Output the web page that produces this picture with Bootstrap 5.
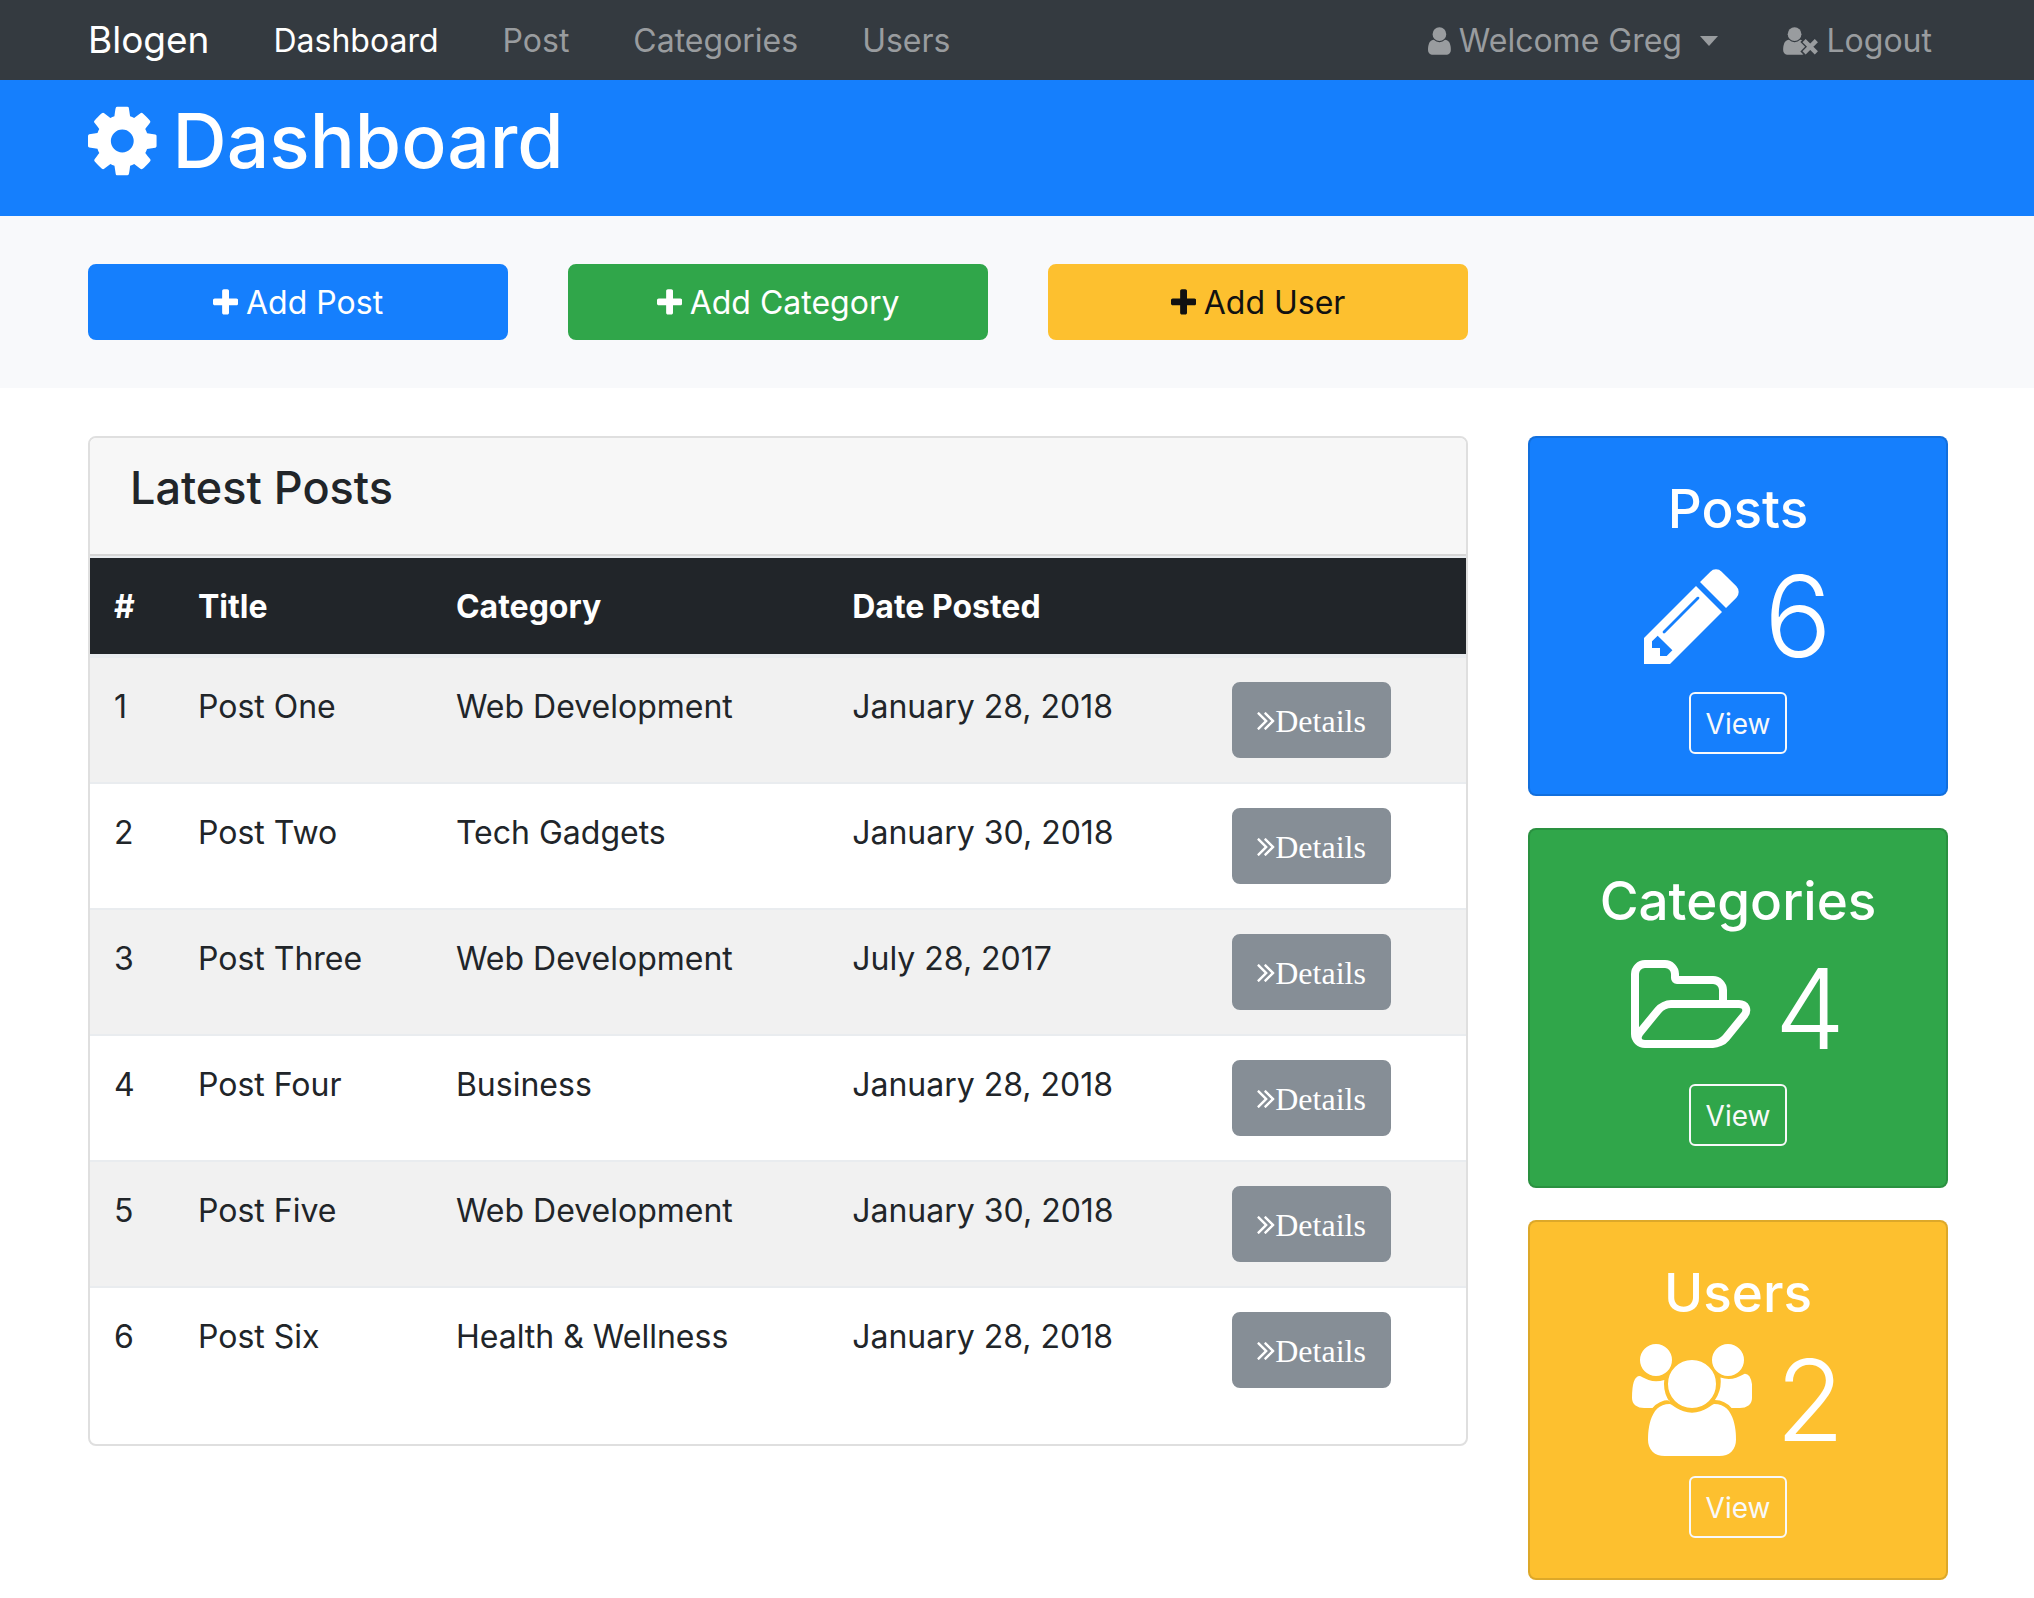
<!DOCTYPE html>
<html lang="en">
<head>
<meta charset="utf-8">
<meta name="viewport" content="width=device-width, initial-scale=1">
<title>Blogen</title>
<link rel="stylesheet" href="https://cdn.jsdelivr.net/npm/bootstrap@5.3.0/dist/css/bootstrap.min.css">
<style>
  :root {
    --brand-blue: #157ffd;
    --brand-green: #30a64a;
    --brand-yellow: #fdc02f;
    --bar: #343a40;
    --ink: #212529;
    --line: #e9ecef;
  }
  html { font-size: 32px; }
  body { font-family: Inter, "Liberation Sans", sans-serif; color: var(--ink); background: #fff; line-height: 1.5; }
  h1, h2, h3, h4 { line-height: 1.1; margin-bottom: 16px; font-weight: 500; }
  .container { max-width: 1920px; padding-left: 31px; padding-right: 29px; }
  .row { --bs-gutter-x: 60px; }

  .icon { height: 1em; width: auto; fill: currentColor; flex: none; }

  /* top bar */
  .topbar { background: var(--bar); padding: 0; min-height: 80px; --bs-navbar-brand-margin-end: 32px; }
  .topbar .navbar-brand { font-size: 37px; line-height: 60px; padding: 0; color: #fff; }
  .topbar .nav-link { color: #999c9f; padding: 17px 16px 15px; line-height: 48px; display: flex; align-items: center; gap: 8px; }
  .topbar .nav-link.active { color: #fff; }
  .topbar .dropdown-toggle::after { border-top-width: 10px; border-left-width: 9px; border-right-width: 9px; margin-left: 10px; }

  .page-head { background: var(--brand-blue); color: #fff; padding: 17px 0 15px; }
  .page-head h1 { font-size: 75px; line-height: 88px; display: flex; align-items: center; gap: 16px; }
  .page-head .icon { height: 80px; }

  .actions { background: #f8f9fb; padding: 48px 0; margin-bottom: 48px; }

  .btn { --bs-btn-border-width: 2px; --bs-btn-border-radius: 8px; --bs-btn-line-height: 40px; --bs-btn-font-size: 32px; padding: 17px 24px 15px; }
  .btn-add { display: flex; justify-content: center; align-items: center; gap: 8px; }
  .btn-blue { --bs-btn-bg: var(--brand-blue); --bs-btn-border-color: var(--brand-blue); --bs-btn-color: #fff; --bs-btn-hover-bg: #0069d9; --bs-btn-hover-color: #fff; }
  .btn-green { --bs-btn-bg: var(--brand-green); --bs-btn-border-color: var(--brand-green); --bs-btn-color: #fff; --bs-btn-hover-bg: #218838; --bs-btn-hover-color: #fff; }
  .btn-yellow { --bs-btn-bg: var(--brand-yellow); --bs-btn-border-color: var(--brand-yellow); --bs-btn-color: #111; --bs-btn-hover-bg: #e0a800; --bs-btn-hover-color: #111; }
  .btn-details { --bs-btn-bg: #868e96; --bs-btn-border-color: #868e96; --bs-btn-color: #fff; --bs-btn-hover-bg: #727b84; --bs-btn-hover-color: #fff; font-family: "Liberation Serif", "Times New Roman", serif; padding-left: 23px; padding-right: 23px; }
  .btn-view { --bs-btn-border-color: #f8f9fa; --bs-btn-color: #f8f9fa; --bs-btn-hover-bg: #f8f9fa; --bs-btn-hover-color: #212529; --bs-btn-font-size: 28px; --bs-btn-line-height: 42px; --bs-btn-border-radius: 6px; padding: 9px 15px 7px; }

  .card { --bs-card-border-width: 2px; --bs-card-border-color: #dfdfdf; --bs-card-border-radius: 8px; --bs-card-inner-border-radius: 6px; }
  .posts-head { background: #f7f7f7; padding: 24px 40px; border-bottom: 2px solid #d6d6d6; }
  .posts-head h4 { font-size: 45px; line-height: 52px; }

  .posts-table { border-collapse: separate; border-spacing: 0; table-layout: fixed; margin-bottom: 32px; line-height: 50px; --bs-table-striped-bg: #f1f1f1; --bs-table-color: var(--ink); }
  .posts-table > :not(caption) > * > * { padding: 24px; border: 0 solid var(--line); }
  .posts-table thead > tr > th { background: #212529; color: #fff; padding-bottom: 22px; border-top-width: 2px; border-bottom-width: 4px; background-clip: padding-box; box-shadow: none; }
  .posts-table tbody > tr:not(:first-child) > td { border-top-width: 2px; }
  .w-num { width: 6.1%; }
  .w-title { width: 18.75%; }
  .w-cat { width: 28.8%; }
  .w-date { width: 27.6%; }

  .stat { color: #fff; border-color: rgba(0, 0, 0, .125); background-clip: border-box; }
  .stat + .stat { margin-top: 32px; }
  .stat .card-body { padding: 40px; }
  .stat h3 { font-size: 53px; line-height: 62px; }
  .stat .figure-line { font-size: 112px; font-weight: 300; line-height: 120px; margin-bottom: 16px; display: flex; justify-content: center; align-items: center; gap: 24px; }
  .stat-blue { background-color: var(--brand-blue); }
  .stat-green { background-color: var(--brand-green); }
  .stat-yellow { background-color: var(--brand-yellow); }
</style>
<script src="https://cdn.jsdelivr.net/npm/bootstrap@5.3.0/dist/js/bootstrap.bundle.min.js" defer></script>
</head>
<body>

<svg width="0" height="0" class="d-none" aria-hidden="true">
  <symbol id="i-plus" viewBox="192 0 1408 1792"><path d="M1600 736v192q0 40-28 68t-68 28h-416v416q0 40-28 68t-68 28h-192q-40 0-68-28t-28-68v-416h-416q-40 0-68-28t-28-68v-192q0-40 28-68t68-28h416v-416q0-40 28-68t68-28h192q40 0 68 28t28 68v416h416q40 0 68 28t28 68z"/></symbol>
  <symbol id="i-more" viewBox="384 64 1024 1792"><path d="M979 960q0 13-10 23l-466 466q-10 10-23 10t-23-10l-50-50q-10-10-10-23t10-23l393-393-393-393q-10-10-10-23t10-23l50-50q10-10 23-10t23 10l466 466q10 10 10 23zm384 0q0 13-10 23l-466 466q-10 10-23 10t-23-10l-50-50q-10-10-10-23t10-23l393-393-393-393q-10-10-10-23t10-23l50-50q10-10 23-10t23 10l466 466q10 10 10 23z"/></symbol>
</svg>

<nav class="navbar navbar-expand-sm topbar" data-bs-theme="dark">
  <div class="container">
    <a class="navbar-brand" href="#">Blogen</a>
    <div class="collapse navbar-collapse">
      <ul class="navbar-nav">
        <li class="nav-item px-2"><a class="nav-link active" aria-current="page" href="#">Dashboard</a></li>
        <li class="nav-item px-2"><a class="nav-link" href="#">Post</a></li>
        <li class="nav-item px-2"><a class="nav-link" href="#">Categories</a></li>
        <li class="nav-item px-2"><a class="nav-link" href="#">Users</a></li>
      </ul>
      <ul class="navbar-nav ms-auto">
        <li class="nav-item dropdown me-3">
          <a class="nav-link dropdown-toggle" href="#" role="button" data-bs-toggle="dropdown" aria-expanded="false">
            <svg class="icon" viewBox="256 0 1280 1792" aria-hidden="true"><path d="M1536 1399q0 109-62.500 187t-150.500 78h-854q-88 0-150.500-78t-62.500-187q0-85 8.500-160.500t31.500-152 58.500-131 94-89 134.500-34.500q131 128 313 128t313-128q76 0 134.500 34.500t94 89 58.500 131 31.500 152 8.500 160.500zm-256-887q0 159-112.500 271.500t-271.500 112.500-271.500-112.500-112.500-271.500 112.500-271.500 271.500-112.500 271.500 112.500 112.500 271.500z"/></svg>
            Welcome Greg</a>
          <ul class="dropdown-menu">
            <li><a class="dropdown-item" href="#">Profile</a></li>
            <li><a class="dropdown-item" href="#">Settings</a></li>
          </ul>
        </li>
        <li class="nav-item">
          <a class="nav-link" href="#">
            <svg class="icon" viewBox="0 0 2048 1792" aria-hidden="true"><circle cx="704" cy="512" r="384"/><path d="M1344 1399q0 109-62.500 187t-150.500 78h-854q-88 0-150.500-78t-62.500-187q0-85 8.500-160.500t31.500-152 58.500-131 94-89 134.500-34.500q131 128 313 128t313-128q76 0 134.500 34.500t94 89 58.500 131 31.500 152 8.500 160.500z"/><path d="M1170 806L1990 1626M1990 806L1170 1626" fill="none" stroke="#343a40" stroke-width="400"/><path d="M1236 872L1924 1560M1924 872L1236 1560" fill="none" stroke="currentColor" stroke-width="250"/></svg>
            Logout</a>
        </li>
      </ul>
    </div>
  </div>
</nav>

<header class="page-head">
  <div class="container">
    <h1>
      <svg class="icon" viewBox="128 0 1536 1792" aria-hidden="true"><path d="M1152 896q0-106-75-181t-181-75-181 75-75 181 75 181 181 75 181-75 75-181zm512-109v222q0 12-8 23t-20 13l-185 28q-19 54-39 91 35 50 107 138 10 12 10 25t-9 23q-27 37-99 108t-94 71q-12 0-26-9l-138-108q-44 23-91 38-16 136-29 186-7 28-36 28h-222q-14 0-24.500-8.500t-11.500-21.500l-28-184q-49-16-90-37l-141 107q-10 9-25 9-14 0-25-11-126-114-165-168-7-10-7-23 0-12 8-23 15-21 51-66.500t54-70.500q-27-50-41-99l-183-27q-13-2-21-12.500t-8-23.500v-222q0-12 8-23t19-13l186-28q14-46 39-92-40-57-107-138-10-12-10-24 0-10 9-23 26-36 98.500-107.500t94.500-71.500q13 0 26 10l138 107q44-23 91-38 16-136 29-186 7-28 36-28h222q14 0 24.500 8.500t11.500 21.500l28 184q49 16 90 37l142-107q9-9 24-9 13 0 25 10 129 119 165 170 7 8 7 22 0 12-8 23-15 21-51 66.500t-54 70.500q26 50 41 98l183 28q13 2 21 12.500t8 23.500z"/></svg>
      Dashboard</h1>
  </div>
</header>

<section class="actions">
  <div class="container">
    <div class="row">
      <div class="col-md-3"><a href="#" class="btn btn-blue btn-add w-100"><svg class="icon" viewBox="192 0 1408 1792" aria-hidden="true"><use href="#i-plus" x="192" y="0" width="1408" height="1792"/></svg>Add Post</a></div>
      <div class="col-md-3"><a href="#" class="btn btn-green btn-add w-100"><svg class="icon" viewBox="192 0 1408 1792" aria-hidden="true"><use href="#i-plus" x="192" y="0" width="1408" height="1792"/></svg>Add Category</a></div>
      <div class="col-md-3"><a href="#" class="btn btn-yellow btn-add w-100"><svg class="icon" viewBox="192 0 1408 1792" aria-hidden="true"><use href="#i-plus" x="192" y="0" width="1408" height="1792"/></svg>Add User</a></div>
    </div>
  </div>
</section>

<main class="container">
  <div class="row align-items-start">
    <div class="col-md-9">
      <div class="card overflow-hidden">
        <div class="posts-head"><h4>Latest Posts</h4></div>
        <table class="table table-striped posts-table">
          <thead>
            <tr>
              <th class="w-num" scope="col">#</th>
              <th class="w-title" scope="col">Title</th>
              <th class="w-cat" scope="col">Category</th>
              <th class="w-date" scope="col">Date Posted</th>
              <th></th>
            </tr>
          </thead>
          <tbody>
            <tr><td>1</td><td>Post One</td><td>Web Development</td><td>January 28, 2018</td><td><a href="#" class="btn btn-details d-inline-flex align-items-center"><svg class="icon" viewBox="384 64 1024 1792" aria-hidden="true"><use href="#i-more" x="384" y="64" width="1024" height="1792"/></svg>Details</a></td></tr>
            <tr><td>2</td><td>Post Two</td><td>Tech Gadgets</td><td>January 30, 2018</td><td><a href="#" class="btn btn-details d-inline-flex align-items-center"><svg class="icon" viewBox="384 64 1024 1792" aria-hidden="true"><use href="#i-more" x="384" y="64" width="1024" height="1792"/></svg>Details</a></td></tr>
            <tr><td>3</td><td>Post Three</td><td>Web Development</td><td>July 28, 2017</td><td><a href="#" class="btn btn-details d-inline-flex align-items-center"><svg class="icon" viewBox="384 64 1024 1792" aria-hidden="true"><use href="#i-more" x="384" y="64" width="1024" height="1792"/></svg>Details</a></td></tr>
            <tr><td>4</td><td>Post Four</td><td>Business</td><td>January 28, 2018</td><td><a href="#" class="btn btn-details d-inline-flex align-items-center"><svg class="icon" viewBox="384 64 1024 1792" aria-hidden="true"><use href="#i-more" x="384" y="64" width="1024" height="1792"/></svg>Details</a></td></tr>
            <tr><td>5</td><td>Post Five</td><td>Web Development</td><td>January 30, 2018</td><td><a href="#" class="btn btn-details d-inline-flex align-items-center"><svg class="icon" viewBox="384 64 1024 1792" aria-hidden="true"><use href="#i-more" x="384" y="64" width="1024" height="1792"/></svg>Details</a></td></tr>
            <tr><td>6</td><td>Post Six</td><td>Health &amp; Wellness</td><td>January 28, 2018</td><td><a href="#" class="btn btn-details d-inline-flex align-items-center"><svg class="icon" viewBox="384 64 1024 1792" aria-hidden="true"><use href="#i-more" x="384" y="64" width="1024" height="1792"/></svg>Details</a></td></tr>
          </tbody>
        </table>
      </div>
    </div>

    <div class="col-md-3">
      <div class="card stat stat-blue text-center">
        <div class="card-body">
          <h3>Posts</h3>
          <div class="figure-line"><svg class="icon" viewBox="128 0 1536 1792" aria-hidden="true"><path d="M491 1536l91-91-235-235-91 91v107h128v128h107zm523-928q0-22-22-22-10 0-17 7l-542 542q-7 7-7 17 0 22 22 22 10 0 17-7l542-542q7-7 7-17zm-54-192l416 416-832 832h-416v-416zm683 96q0 53-37 90l-166 166-416-416 166-165q36-38 90-38 53 0 91 38l235 234q37 39 37 91z"/></svg>6</div>
          <a href="#" class="btn btn-view d-inline-block align-top">View</a>
        </div>
      </div>
      <div class="card stat stat-green text-center">
        <div class="card-body">
          <h3>Categories</h3>
          <div class="figure-line"><svg class="icon" viewBox="64 0 1920 1792" aria-hidden="true"><path d="M1845 931q0-35-53-35h-1088q-40 0-85.500 21.500t-71.500 52.500l-294 363q-18 24-18 40 0 35 53 35h1088q40 0 86-22t71-53l294-363q18-22 18-39zm-1141-163h768v-160q0-40-28-68t-68-28h-576q-40 0-68-28t-28-68v-64q0-40-28-68t-68-28h-320q-40 0-68 28t-28 68v853l256-315q44-53 116-87.500t140-34.500zm1269 163q0 62-46 120l-295 363q-43 53-116 87.500t-140 34.500h-1088q-92 0-158-66t-66-158v-960q0-92 66-158t158-66h320q92 0 158 66t66 158v32h544q92 0 158 66t66 158v160h192q54 0 99 24.500t67 70.500q15 32 15 68z"/></svg>4</div>
          <a href="#" class="btn btn-view d-inline-block align-top">View</a>
        </div>
      </div>
      <div class="card stat stat-yellow text-center">
        <div class="card-body">
          <h3>Users</h3>
          <div class="figure-line"><svg class="icon" viewBox="0 0 1920 1792" aria-hidden="true"><path d="M593 896q-162 5-265 128h-134q-82 0-138-40.500t-56-118.500q0-353 124-353 6 0 43.500 21t97.500 42.500 119 21.500q67 0 133-23-5 37-5 66 0 159 93 293zm1071 637q0 120-73 189.500t-194 69.500h-874q-121 0-194-69.500t-73-189.500q0-53 3.500-103.500t14-109 26.500-108.500 43-97.500 62-81 85.500-53.500 111.500-20q10 0 43 21.500t73 48 107 48 135 21.500 135-21.500 107-48 73-48 43-21.500q61 0 111.500 20t85.500 53.500 62 81 43 97.500 26.500 108.500 14 109 3.500 103.500zm-1024-1277q0 106-75 181t-181 75-181-75-75-181 75-181 181-75 181 75 75 181zm704 384q0 159-112.500 271.500t-271.500 112.500-271.500-112.500-112.500-271.500 112.500-271.500 271.500-112.500 271.500 112.500 112.500 271.500zm576 225q0 78-56 118.500t-138 40.500h-134q-103-123-265-128 93-134 93-293 0-29-5-66 66 23 133 23 59 0 119-21.500t97.500-42.500 43.500-21q124 0 124 353zm-128-609q0 106-75 181t-181 75-181-75-75-181 75-181 181-75 181 75 75 181z"/></svg>2</div>
          <a href="#" class="btn btn-view d-inline-block align-top">View</a>
        </div>
      </div>
    </div>
  </div>
</main>
</body>
</html>
